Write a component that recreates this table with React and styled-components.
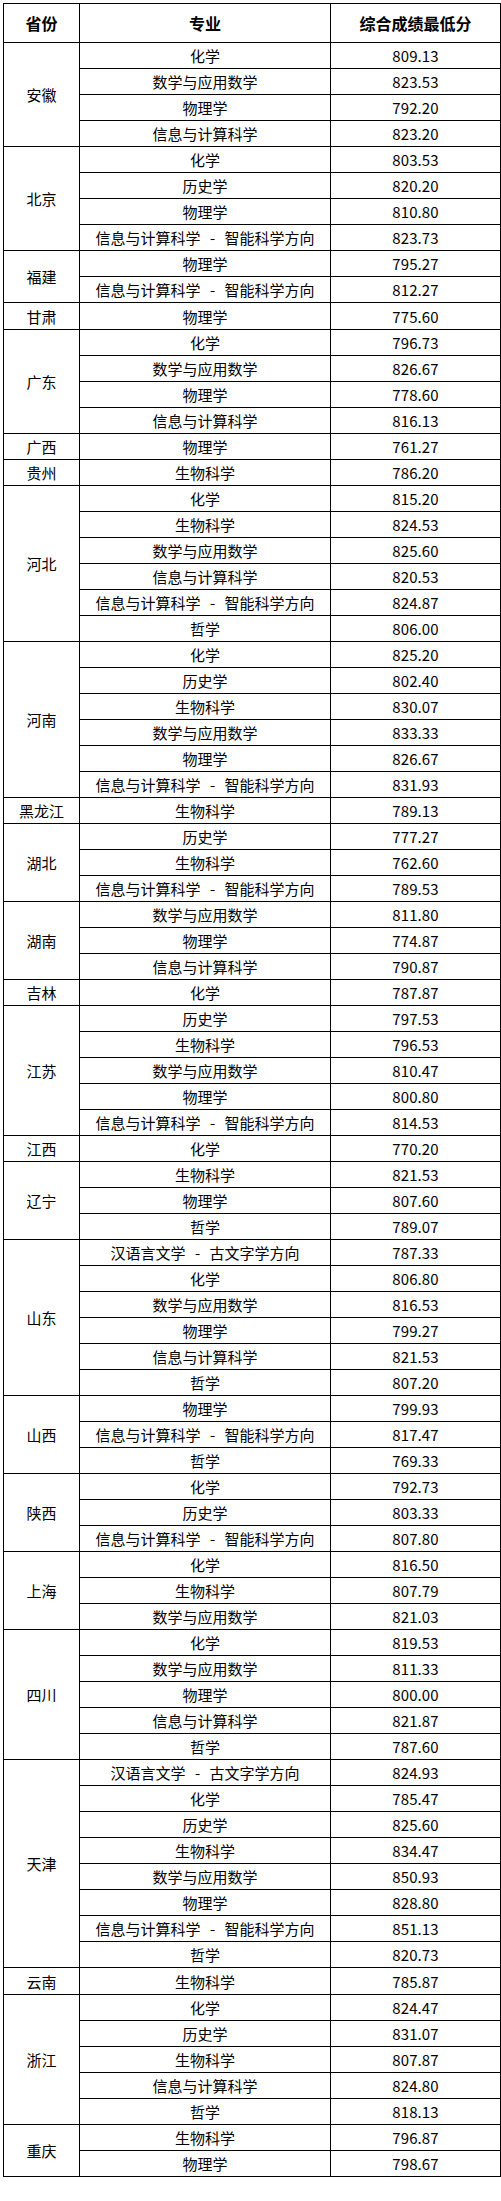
import React from "react";
import styled, { createGlobalStyle } from "styled-components";

const GlobalStyle = createGlobalStyle`
  html, body {
    margin: 0;
    padding: 0;
    background: #ffffff;
  }
  body {
    font-family: "Noto Sans CJK SC", "Noto Sans", sans-serif;
    color: #000000;
  }
`;

const Page = styled.div`
  padding: 3px 2px 24px 3px;
`;

const Table = styled.table`
  width: 497px;
  border-collapse: collapse;
  table-layout: fixed;
  font-family: "Noto Sans CJK SC", "Noto Sans", sans-serif;
`;

const HeadCell = styled.th`
  height: 38px;
  padding: 0;
  border: 1px solid #000;
  font-size: 16px;
  font-weight: 700;
  text-align: center;
  vertical-align: middle;
  line-height: 1;
  color: #000;
`;

const Cell = styled.td`
  height: ${(p) => (p.$tall ? 26 : 25)}px;
  padding: 0;
  border: 1px solid #000;
  font-size: 15px;
  font-weight: 400;
  text-align: center;
  vertical-align: middle;
  line-height: 1;
  color: #000;
  white-space: nowrap;
`;

const ProvinceCell = styled(Cell)`
  font-size: 15px;
`;

const ScoreCell = styled(Cell)`
  letter-spacing: 0.1px;
`;

const Sep = styled.span`
  display: inline-block;
  width: 24px;
  text-align: center;
`;

function Major({ name }) {
  const parts = name.split(" - ");
  if (parts.length === 1) return name;
  return (
    <>
      {parts[0]}
      <Sep>-</Sep>
      {parts[1]}
    </>
  );
}

const data = [
  ["安徽", [["化学", "809.13"], ["数学与应用数学", "823.53"], ["物理学", "792.20"], ["信息与计算科学", "823.20"]]],
  ["北京", [["化学", "803.53"], ["历史学", "820.20"], ["物理学", "810.80"], ["信息与计算科学 - 智能科学方向", "823.73"]]],
  ["福建", [["物理学", "795.27"], ["信息与计算科学 - 智能科学方向", "812.27"]]],
  ["甘肃", [["物理学", "775.60"]], true],
  ["广东", [["化学", "796.73"], ["数学与应用数学", "826.67"], ["物理学", "778.60"], ["信息与计算科学", "816.13"]]],
  ["广西", [["物理学", "761.27"]]],
  ["贵州", [["生物科学", "786.20"]]],
  ["河北", [["化学", "815.20"], ["生物科学", "824.53"], ["数学与应用数学", "825.60"], ["信息与计算科学", "820.53"], ["信息与计算科学 - 智能科学方向", "824.87"], ["哲学", "806.00"]]],
  ["河南", [["化学", "825.20"], ["历史学", "802.40"], ["生物科学", "830.07"], ["数学与应用数学", "833.33"], ["物理学", "826.67"], ["信息与计算科学 - 智能科学方向", "831.93"]]],
  ["黑龙江", [["生物科学", "789.13"]]],
  ["湖北", [["历史学", "777.27"], ["生物科学", "762.60"], ["信息与计算科学 - 智能科学方向", "789.53"]]],
  ["湖南", [["数学与应用数学", "811.80"], ["物理学", "774.87"], ["信息与计算科学", "790.87"]]],
  ["吉林", [["化学", "787.87"]]],
  ["江苏", [["历史学", "797.53"], ["生物科学", "796.53"], ["数学与应用数学", "810.47"], ["物理学", "800.80"], ["信息与计算科学 - 智能科学方向", "814.53"]]],
  ["江西", [["化学", "770.20"]]],
  ["辽宁", [["生物科学", "821.53"], ["物理学", "807.60"], ["哲学", "789.07"]]],
  ["山东", [["汉语言文学 - 古文字学方向", "787.33"], ["化学", "806.80"], ["数学与应用数学", "816.53"], ["物理学", "799.27"], ["信息与计算科学", "821.53"], ["哲学", "807.20"]]],
  ["山西", [["物理学", "799.93"], ["信息与计算科学 - 智能科学方向", "817.47"], ["哲学", "769.33"]]],
  ["陕西", [["化学", "792.73"], ["历史学", "803.33"], ["信息与计算科学 - 智能科学方向", "807.80"]]],
  ["上海", [["化学", "816.50"], ["生物科学", "807.79"], ["数学与应用数学", "821.03"]]],
  ["四川", [["化学", "819.53"], ["数学与应用数学", "811.33"], ["物理学", "800.00"], ["信息与计算科学", "821.87"], ["哲学", "787.60"]]],
  ["天津", [["汉语言文学 - 古文字学方向", "824.93"], ["化学", "785.47"], ["历史学", "825.60"], ["生物科学", "834.47"], ["数学与应用数学", "850.93"], ["物理学", "828.80"], ["信息与计算科学 - 智能科学方向", "851.13"], ["哲学", "820.73"]]],
  ["云南", [["生物科学", "785.87"]], true],
  ["浙江", [["化学", "824.47"], ["历史学", "831.07"], ["生物科学", "807.87"], ["信息与计算科学", "824.80"], ["哲学", "818.13"]]],
  ["重庆", [["生物科学", "796.87"], ["物理学", "798.67"]]],
];

export default function App() {
  return (
    <>
      <GlobalStyle />
      <Page>
        <Table>
          <colgroup>
            <col style={{ width: 76 }} />
            <col style={{ width: 251 }} />
            <col style={{ width: 170 }} />
          </colgroup>
          <thead>
            <tr>
              <HeadCell>省份</HeadCell>
              <HeadCell>专业</HeadCell>
              <HeadCell>综合成绩最低分</HeadCell>
            </tr>
          </thead>
          <tbody>
            {data.map(([prov, rows, tall]) =>
              rows.map(([major, score], i) => (
                <tr key={prov + i}>
                  {i === 0 && (
                    <ProvinceCell rowSpan={rows.length} $tall={tall}>
                      {prov}
                    </ProvinceCell>
                  )}
                  <Cell $tall={tall}>
                    <Major name={major} />
                  </Cell>
                  <ScoreCell $tall={tall}>{score}</ScoreCell>
                </tr>
              ))
            )}
          </tbody>
        </Table>
      </Page>
    </>
  );
}
